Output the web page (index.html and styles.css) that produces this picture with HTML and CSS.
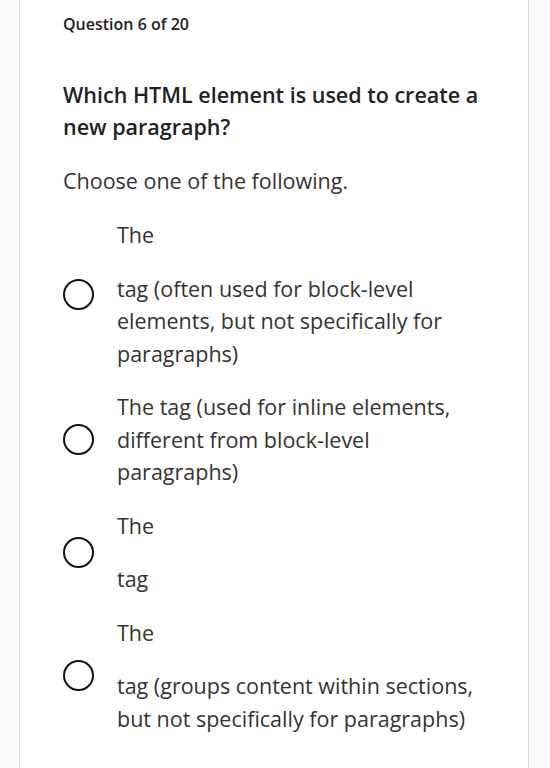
FILE: index.html
```html
<!DOCTYPE html>
<html lang="en">
<head>
<meta charset="utf-8">
<title>Question 6 of 20</title>
<link rel="stylesheet" href="styles.css">
</head>
<body>
<main class="card">
  <div class="counter">Question 6 of 20</div>
  <h1 class="question">Which HTML element is used to create a new paragraph?</h1>
  <p class="instruction">Choose one of the following.</p>
  <ul class="options">
    <li class="option">
      <span class="radio"></span>
      <div class="label">
        <p>The</p>
        <p>tag (often used for block-level elements, but not specifically for paragraphs)</p>
      </div>
    </li>
    <li class="option">
      <span class="radio"></span>
      <div class="label">
        <p>The tag (used for inline elements, different from block-level paragraphs)</p>
      </div>
    </li>
    <li class="option">
      <span class="radio"></span>
      <div class="label">
        <p>The</p>
        <p>tag</p>
      </div>
    </li>
    <li class="option">
      <span class="radio"></span>
      <div class="label">
        <p>The</p>
        <p>tag (groups content within sections, but not specifically for paragraphs)</p>
      </div>
    </li>
  </ul>
</main>
</body>
</html>
```
FILE: styles.css
```css
html, body {
  margin: 0;
  padding: 0;
}
body {
  background: #f9f9f9;
  font-family: "Open Sans", "Liberation Sans", sans-serif;
  color: #262626;
}
.card {
  margin-left: 19px;
  width: 510px;
  min-height: 768px;
  box-sizing: border-box;
  background: #fff;
  border-left: 1px solid #dcdcdc;
  border-right: 1px solid #dcdcdc;
  padding: 13px 43px 0 43px;
}
.counter {
  font-size: 16px;
  font-weight: 600;
  line-height: 22px;
  color: #222;
}
.question {
  margin: 44px 0 0;
  font-size: 21.5px;
  font-weight: 600;
  line-height: 32px;
  color: #222;
}
.instruction {
  margin: 22px 0 0;
  font-size: 21.5px;
  line-height: 32px;
  color: #333;
}
.options {
  list-style: none;
  margin: 22px 0 0;
  padding: 0;
  display: flex;
  flex-direction: column;
  gap: 21px;
}
.option {
  display: flex;
  align-items: center;
  gap: 23px;
}
.radio {
  flex: none;
  width: 31px;
  height: 31px;
  border: 2.5px solid #111;
  border-radius: 50%;
  box-sizing: border-box;
}
.label {
  display: flex;
  flex-direction: column;
  gap: 21px;
  font-size: 21.5px;
  line-height: 32.5px;
  color: #333;
  max-width: 365px;
}
.label p {
  margin: 0;
}
```
